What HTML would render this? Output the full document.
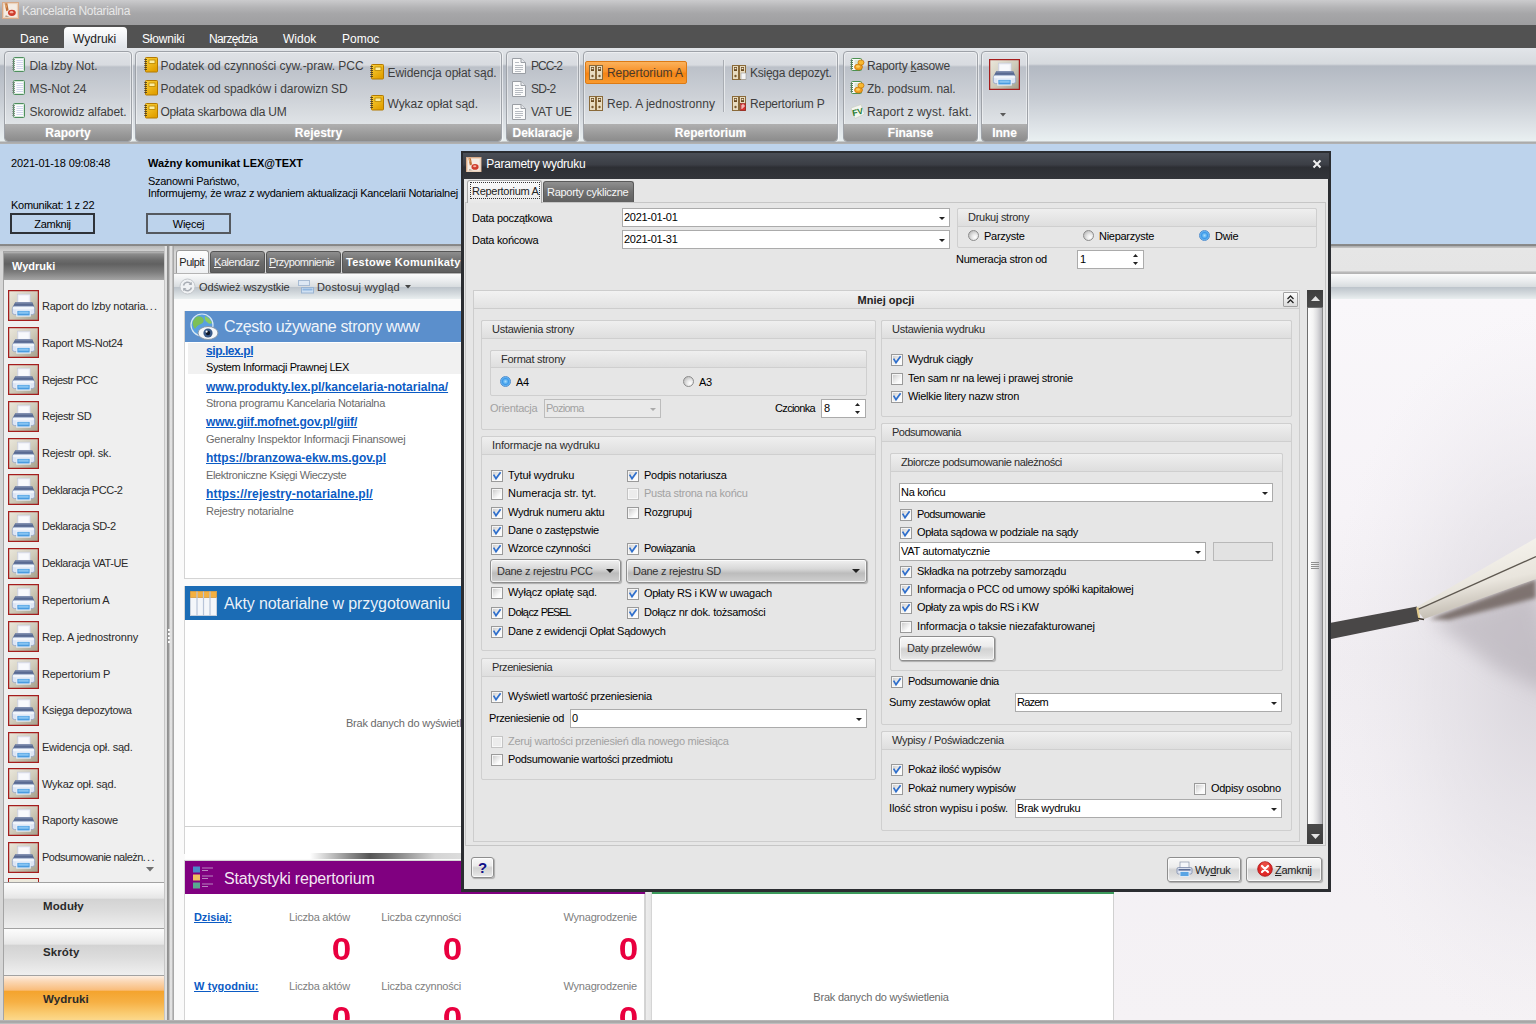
<!DOCTYPE html>
<html lang="pl"><head><meta charset="utf-8"><title>Kancelaria Notarialna</title>
<style>
html,body{margin:0;padding:0;background:#d6d6d6;}
#app{position:relative;width:1536px;height:1024px;overflow:hidden;font-family:"Liberation Sans",sans-serif;font-size:11px;color:#000;background:#d9d9d9;}
#app div,#app span,#app svg{position:absolute;box-sizing:border-box;}
#app span{white-space:nowrap;line-height:14px;}
.t{font-size:11px;letter-spacing:-0.28px;}
.s{font-size:11px;letter-spacing:-0.22px;color:#2a2a2a;}
.r{font-size:12px;letter-spacing:-0.05px;color:#3e3e3e;}
.m{font-size:12px;color:#fff;}
.b{font-weight:bold;}
.g{color:#6a6a6a;}
.dis{color:#a2a2a2;}
.lnk{font-size:12px;font-weight:bold;color:#0b5bc4;text-decoration:underline;}
.hd{font-size:16px;color:rgba(255,255,255,.92);letter-spacing:-0.36px;}
.cap{font-size:12px;font-weight:bold;color:#fff;text-align:center;text-shadow:0 0 2px rgba(255,255,255,.35);}
.grp{border:1px solid #cfcfcf;border-radius:2px;background:#e6e6e6;}
.grph{border:1px solid #cfcfcf;border-radius:2px 2px 0 0;background:linear-gradient(#efefef,#dedede);}
.inp{background:#fff;border:1px solid #ababab;}
.cb{border:1px solid #9a9a9a;background:linear-gradient(135deg,#c4c4c4 0,#e2e2e2 35%,#fbfbfb 70%);box-shadow:inset 0 0 0 1px rgba(250,250,250,.85);}
.cb.dis{border-color:#c4c4c4;background:#ececec;}
.rb{border-radius:50%;border:1px solid #8c8c8c;background:radial-gradient(circle at 68% 68%,#ffffff 0,#e8e8e8 35%,#b4b4b4 90%);}
.rb.on{border-color:#4f8fd0;background:radial-gradient(circle at 50% 50%,#a8dcfc 0,#58aef0 2.2px,#3c98e8 3px,#8fd0fa 5.5px);}
.btn{border:1px solid #8e8e8e;border-radius:3px;background:linear-gradient(#f8f8f8,#ececec 40%,#d2d2d2 52%,#dedede 80%,#ececec);box-shadow:inset 0 0 0 1px rgba(255,255,255,.7),1px 1px 1px rgba(0,0,0,.25);}

</style></head><body>
<div id="app">
<div style="left:0px;top:0px;width:1536px;height:25px;background:linear-gradient(#cbcbcd,#b4b4b6 30%,#a6a6a8 55%,#9e9ea0);"></div>
<svg style="left:2px;top:2px" width="17" height="17" viewBox="0 0 16 16"><rect x="0.5" y="0.5" width="15" height="15" fill="#f4ece4" stroke="#d8aa88"/><rect x="1.5" y="1.5" width="13" height="13" fill="none" stroke="#ead2bc" stroke-width="1"/><path d="M2.5 1.5 L5 1.2 L6.2 7.8 L4 8.8 Z" fill="#c07038"/><path d="M3 2 L4 2 L4.6 5 L3.6 5.4 Z" fill="#e8b070"/><ellipse cx="9.3" cy="10.2" rx="3.7" ry="2.9" fill="#cf3c2c"/><ellipse cx="9" cy="9.6" rx="1.7" ry="1.1" fill="#f4b0a0"/><path d="M3.5 12.5 L7 13.8 L3 14 Z" fill="#a89888"/></svg>
<span class="m" style="left:22px;top:3.5px;color:#e8e8e8;font-size:12px;letter-spacing:-0.32px;">Kancelaria Notarialna</span>
<div style="left:0px;top:25px;width:1536px;height:23px;background:#525252;"></div>
<div style="left:64px;top:27px;width:63px;height:21px;background:linear-gradient(#ffffff,#f0f2f5 50%,#dfe3e8);border-radius:4px 4px 0 0;"></div>
<span class="m" style="left:20px;top:32.0px;color:#fff;">Dane</span>
<span class="m" style="left:73px;top:32.0px;color:#1a1a1a;">Wydruki</span>
<span class="m" style="left:142px;top:32.0px;color:#fff;letter-spacing:-0.2px;">Słowniki</span>
<span class="m" style="left:209px;top:32.0px;color:#fff;letter-spacing:-0.65px;">Narzędzia</span>
<span class="m" style="left:283px;top:32.0px;color:#fff;">Widok</span>
<span class="m" style="left:342px;top:32.0px;color:#fff;">Pomoc</span>
<div style="left:0px;top:48px;width:1536px;height:96px;background:linear-gradient(#e2e5e9 0,#d6dade 16px,#b3b9c2 18px,#c6cbd2 50px,#dfe4e8 80px,#e9f0f1 93px,#a8a8a8 94px,#b4b4b4 96px);"></div>
<div style="left:4px;top:51px;width:128px;height:91px;border:1px solid #9ea2a8;border-radius:4px;background:linear-gradient(#dfe2e6 0,#d8dbe0 13px,#bcc1c9 15px,#cdd1d7 45px,#e0e4e7 73px);box-shadow:inset 0 0 0 1px rgba(255,255,255,.45), 1px 0 0 rgba(255,255,255,.6);"></div>
<div style="left:5px;top:124px;width:126px;height:17px;background:linear-gradient(#b0b0b0,#999999 60%,#8c8c8c);border-radius:0 0 3px 3px;"></div>
<span class="cap" style="left:4.0px;width:128px;text-align:center;top:125.5px;">Raporty</span>
<div style="left:135px;top:51px;width:367px;height:91px;border:1px solid #9ea2a8;border-radius:4px;background:linear-gradient(#dfe2e6 0,#d8dbe0 13px,#bcc1c9 15px,#cdd1d7 45px,#e0e4e7 73px);box-shadow:inset 0 0 0 1px rgba(255,255,255,.45), 1px 0 0 rgba(255,255,255,.6);"></div>
<div style="left:136px;top:124px;width:365px;height:17px;background:linear-gradient(#b0b0b0,#999999 60%,#8c8c8c);border-radius:0 0 3px 3px;"></div>
<span class="cap" style="left:135.0px;width:367px;text-align:center;top:125.5px;">Rejestry</span>
<div style="left:506px;top:51px;width:73px;height:91px;border:1px solid #9ea2a8;border-radius:4px;background:linear-gradient(#dfe2e6 0,#d8dbe0 13px,#bcc1c9 15px,#cdd1d7 45px,#e0e4e7 73px);box-shadow:inset 0 0 0 1px rgba(255,255,255,.45), 1px 0 0 rgba(255,255,255,.6);"></div>
<div style="left:507px;top:124px;width:71px;height:17px;background:linear-gradient(#b0b0b0,#999999 60%,#8c8c8c);border-radius:0 0 3px 3px;"></div>
<span class="cap" style="left:506.0px;width:73px;text-align:center;top:125.5px;">Deklaracje</span>
<div style="left:583px;top:51px;width:255px;height:91px;border:1px solid #9ea2a8;border-radius:4px;background:linear-gradient(#dfe2e6 0,#d8dbe0 13px,#bcc1c9 15px,#cdd1d7 45px,#e0e4e7 73px);box-shadow:inset 0 0 0 1px rgba(255,255,255,.45), 1px 0 0 rgba(255,255,255,.6);"></div>
<div style="left:584px;top:124px;width:253px;height:17px;background:linear-gradient(#b0b0b0,#999999 60%,#8c8c8c);border-radius:0 0 3px 3px;"></div>
<span class="cap" style="left:583.0px;width:255px;text-align:center;top:125.5px;">Repertorium</span>
<div style="left:843px;top:51px;width:135px;height:91px;border:1px solid #9ea2a8;border-radius:4px;background:linear-gradient(#dfe2e6 0,#d8dbe0 13px,#bcc1c9 15px,#cdd1d7 45px,#e0e4e7 73px);box-shadow:inset 0 0 0 1px rgba(255,255,255,.45), 1px 0 0 rgba(255,255,255,.6);"></div>
<div style="left:844px;top:124px;width:133px;height:17px;background:linear-gradient(#b0b0b0,#999999 60%,#8c8c8c);border-radius:0 0 3px 3px;"></div>
<span class="cap" style="left:843.0px;width:135px;text-align:center;top:125.5px;">Finanse</span>
<div style="left:981px;top:51px;width:47px;height:91px;border:1px solid #9ea2a8;border-radius:4px;background:linear-gradient(#dfe2e6 0,#d8dbe0 13px,#bcc1c9 15px,#cdd1d7 45px,#e0e4e7 73px);box-shadow:inset 0 0 0 1px rgba(255,255,255,.45), 1px 0 0 rgba(255,255,255,.6);"></div>
<div style="left:982px;top:124px;width:45px;height:17px;background:linear-gradient(#b0b0b0,#999999 60%,#8c8c8c);border-radius:0 0 3px 3px;"></div>
<span class="cap" style="left:981.0px;width:47px;text-align:center;top:125.5px;">Inne</span>
<svg style="left:11.5px;top:56.8px" width="14" height="15" viewBox="0 0 14 15"><rect x="1.5" y="0.5" width="11" height="14" rx="1" fill="#fdfdfe" stroke="#4f8f5e"/><rect x="2.5" y="1.5" width="9" height="12" fill="none" stroke="#cfe6d4" stroke-width=".8"/><path d="M4.5 3.5H11M4.5 5.5H11M4.5 7.5H11M4.5 9.5H11M4.5 11.5H11" stroke="#d4d8ee" stroke-width="1"/><path d="M0.3 2.5H3M0.3 4.5H3M0.3 6.5H3M0.3 8.5H3M0.3 10.5H3M0.3 12.5H3" stroke="#7a8480" stroke-width=".9"/></svg>
<span class="r" style="left:29.5px;top:58.5px;">Dla Izby Not.</span>
<svg style="left:11.5px;top:79.8px" width="14" height="15" viewBox="0 0 14 15"><rect x="1.5" y="0.5" width="11" height="14" rx="1" fill="#fdfdfe" stroke="#4f8f5e"/><rect x="2.5" y="1.5" width="9" height="12" fill="none" stroke="#cfe6d4" stroke-width=".8"/><path d="M4.5 3.5H11M4.5 5.5H11M4.5 7.5H11M4.5 9.5H11M4.5 11.5H11" stroke="#d4d8ee" stroke-width="1"/><path d="M0.3 2.5H3M0.3 4.5H3M0.3 6.5H3M0.3 8.5H3M0.3 10.5H3M0.3 12.5H3" stroke="#7a8480" stroke-width=".9"/></svg>
<span class="r" style="left:29.5px;top:81.5px;">MS-Not 24</span>
<svg style="left:11.5px;top:102.8px" width="14" height="15" viewBox="0 0 14 15"><rect x="1.5" y="0.5" width="11" height="14" rx="1" fill="#fdfdfe" stroke="#4f8f5e"/><rect x="2.5" y="1.5" width="9" height="12" fill="none" stroke="#cfe6d4" stroke-width=".8"/><path d="M4.5 3.5H11M4.5 5.5H11M4.5 7.5H11M4.5 9.5H11M4.5 11.5H11" stroke="#d4d8ee" stroke-width="1"/><path d="M0.3 2.5H3M0.3 4.5H3M0.3 6.5H3M0.3 8.5H3M0.3 10.5H3M0.3 12.5H3" stroke="#7a8480" stroke-width=".9"/></svg>
<span class="r" style="left:29.5px;top:104.5px;">Skorowidz alfabet.</span>
<svg style="left:143.7px;top:56.8px" width="14" height="16" viewBox="0 0 14 16"><defs><linearGradient id="ny143_56" x1="0" y1="0" x2="0.6" y2="1"><stop offset="0" stop-color="#fbd23a"/><stop offset="1" stop-color="#e2a000"/></linearGradient></defs><rect x="1.5" y="0.5" width="12" height="14.5" rx="0.8" fill="url(#ny143_56)" stroke="#b47a00"/><rect x="5" y="3" width="6" height="3.4" fill="#fdeea0" stroke="#b88600" stroke-width=".8"/><path d="M0.3 2.5H3M0.3 4.5H3M0.3 6.5H3M0.3 8.5H3M0.3 10.5H3M0.3 12.5H3" stroke="#4a3c20" stroke-width=".9"/></svg>
<span class="r" style="left:160.5px;top:58.5px;">Podatek od czynności cyw.-praw. PCC</span>
<svg style="left:143.7px;top:79.8px" width="14" height="16" viewBox="0 0 14 16"><defs><linearGradient id="ny143_79" x1="0" y1="0" x2="0.6" y2="1"><stop offset="0" stop-color="#fbd23a"/><stop offset="1" stop-color="#e2a000"/></linearGradient></defs><rect x="1.5" y="0.5" width="12" height="14.5" rx="0.8" fill="url(#ny143_79)" stroke="#b47a00"/><rect x="5" y="3" width="6" height="3.4" fill="#fdeea0" stroke="#b88600" stroke-width=".8"/><path d="M0.3 2.5H3M0.3 4.5H3M0.3 6.5H3M0.3 8.5H3M0.3 10.5H3M0.3 12.5H3" stroke="#4a3c20" stroke-width=".9"/></svg>
<span class="r" style="left:160.5px;top:81.5px;">Podatek od spadków i darowizn SD</span>
<svg style="left:143.7px;top:102.8px" width="14" height="16" viewBox="0 0 14 16"><defs><linearGradient id="ny143_102" x1="0" y1="0" x2="0.6" y2="1"><stop offset="0" stop-color="#fbd23a"/><stop offset="1" stop-color="#e2a000"/></linearGradient></defs><rect x="1.5" y="0.5" width="12" height="14.5" rx="0.8" fill="url(#ny143_102)" stroke="#b47a00"/><rect x="5" y="3" width="6" height="3.4" fill="#fdeea0" stroke="#b88600" stroke-width=".8"/><path d="M0.3 2.5H3M0.3 4.5H3M0.3 6.5H3M0.3 8.5H3M0.3 10.5H3M0.3 12.5H3" stroke="#4a3c20" stroke-width=".9"/></svg>
<span class="r" style="left:160.5px;top:104.5px;letter-spacing:-0.25px;">Opłata skarbowa dla UM</span>
<svg style="left:370px;top:64.3px" width="14" height="16" viewBox="0 0 14 16"><defs><linearGradient id="ny370_64" x1="0" y1="0" x2="0.6" y2="1"><stop offset="0" stop-color="#fbd23a"/><stop offset="1" stop-color="#e2a000"/></linearGradient></defs><rect x="1.5" y="0.5" width="12" height="14.5" rx="0.8" fill="url(#ny370_64)" stroke="#b47a00"/><rect x="5" y="3" width="6" height="3.4" fill="#fdeea0" stroke="#b88600" stroke-width=".8"/><path d="M0.3 2.5H3M0.3 4.5H3M0.3 6.5H3M0.3 8.5H3M0.3 10.5H3M0.3 12.5H3" stroke="#4a3c20" stroke-width=".9"/></svg>
<span class="r" style="left:387.5px;top:66.0px;">Ewidencja opłat sąd.</span>
<svg style="left:370px;top:95.3px" width="14" height="16" viewBox="0 0 14 16"><defs><linearGradient id="ny370_95" x1="0" y1="0" x2="0.6" y2="1"><stop offset="0" stop-color="#fbd23a"/><stop offset="1" stop-color="#e2a000"/></linearGradient></defs><rect x="1.5" y="0.5" width="12" height="14.5" rx="0.8" fill="url(#ny370_95)" stroke="#b47a00"/><rect x="5" y="3" width="6" height="3.4" fill="#fdeea0" stroke="#b88600" stroke-width=".8"/><path d="M0.3 2.5H3M0.3 4.5H3M0.3 6.5H3M0.3 8.5H3M0.3 10.5H3M0.3 12.5H3" stroke="#4a3c20" stroke-width=".9"/></svg>
<span class="r" style="left:387.5px;top:97.0px;">Wykaz opłat sąd.</span>
<svg style="left:512px;top:57.5px" width="14" height="16" viewBox="0 0 14 16"><path d="M0.5 0.5H9L13.5 4.5V15.5H0.5Z" fill="#fbfbfb" stroke="#9a9ea4"/><path d="M9 0.5V4.5H13.5" fill="#e4e6ea" stroke="#9a9ea4"/><path d="M3 4.5H7M3 7.5H11M3 9.5H11M3 11.5H11M3 13.5H9" stroke="#b8bcc2" stroke-width="1"/></svg>
<span class="r" style="left:531px;top:58.5px;letter-spacing:-1.0px;">PCC-2</span>
<svg style="left:512px;top:80.5px" width="14" height="16" viewBox="0 0 14 16"><path d="M0.5 0.5H9L13.5 4.5V15.5H0.5Z" fill="#fbfbfb" stroke="#9a9ea4"/><path d="M9 0.5V4.5H13.5" fill="#e4e6ea" stroke="#9a9ea4"/><path d="M3 4.5H7M3 7.5H11M3 9.5H11M3 11.5H11M3 13.5H9" stroke="#b8bcc2" stroke-width="1"/></svg>
<span class="r" style="left:531px;top:81.5px;letter-spacing:-0.7px;">SD-2</span>
<svg style="left:512px;top:103.5px" width="14" height="16" viewBox="0 0 14 16"><path d="M0.5 0.5H9L13.5 4.5V15.5H0.5Z" fill="#fbfbfb" stroke="#9a9ea4"/><path d="M9 0.5V4.5H13.5" fill="#e4e6ea" stroke="#9a9ea4"/><path d="M3 4.5H7M3 7.5H11M3 9.5H11M3 11.5H11M3 13.5H9" stroke="#b8bcc2" stroke-width="1"/></svg>
<span class="r" style="left:531px;top:104.5px;">VAT UE</span>
<div style="left:585px;top:61px;width:102px;height:23px;border:1px solid #dc7a14;border-radius:2px;background:linear-gradient(#fbb25c,#f8922a 45%,#f58414 55%,#f99a2e);"></div>
<svg style="left:589px;top:65px" width="15" height="15" viewBox="0 0 15 15"><rect x="0.5" y="0.5" width="6" height="14" fill="#e8dcc0" stroke="#8a6a3a"/><rect x="7.5" y="0.5" width="6" height="14" fill="#e8dcc0" stroke="#8a6a3a"/><rect x="2" y="2" width="3" height="4" fill="#6a4a20"/><rect x="9" y="2" width="3" height="4" fill="#6a4a20"/><circle cx="3.5" cy="11" r="1.2" fill="#7a5a30"/><circle cx="10.5" cy="11" r="1.2" fill="#7a5a30"/><rect x="2.6" y="2.8" width="1.8" height="1.4" fill="#f4ecd8"/><rect x="9.6" y="2.8" width="1.8" height="1.4" fill="#f4ecd8"/></svg>
<span class="r" style="left:607px;top:66.0px;color:#4a3a2a;">Repertorium A</span>
<svg style="left:589px;top:96px" width="15" height="15" viewBox="0 0 15 15"><rect x="0.5" y="0.5" width="6" height="14" fill="#e8dcc0" stroke="#8a6a3a"/><rect x="7.5" y="0.5" width="6" height="14" fill="#e8dcc0" stroke="#8a6a3a"/><rect x="2" y="2" width="3" height="4" fill="#6a4a20"/><rect x="9" y="2" width="3" height="4" fill="#6a4a20"/><circle cx="3.5" cy="11" r="1.2" fill="#7a5a30"/><circle cx="10.5" cy="11" r="1.2" fill="#7a5a30"/><rect x="2.6" y="2.8" width="1.8" height="1.4" fill="#f4ecd8"/><rect x="9.6" y="2.8" width="1.8" height="1.4" fill="#f4ecd8"/></svg>
<span class="r" style="left:607px;top:97.0px;letter-spacing:0.03px;">Rep. A jednostronny</span>
<div style="left:723px;top:60px;width:1px;height:52px;background:#a9adb3;"></div>
<div style="left:724px;top:60px;width:1px;height:52px;background:#e6e9ec;"></div>
<svg style="left:732px;top:65px" width="15" height="15" viewBox="0 0 15 15"><rect x="0.5" y="0.5" width="6" height="14" fill="#e8dcc0" stroke="#8a6a3a"/><rect x="7.5" y="0.5" width="6" height="14" fill="#e8dcc0" stroke="#8a6a3a"/><rect x="2" y="2" width="3" height="4" fill="#6a4a20"/><rect x="9" y="2" width="3" height="4" fill="#6a4a20"/><circle cx="3.5" cy="11" r="1.2" fill="#7a5a30"/><circle cx="10.5" cy="11" r="1.2" fill="#7a5a30"/><rect x="2.6" y="2.8" width="1.8" height="1.4" fill="#f4ecd8"/><rect x="9.6" y="2.8" width="1.8" height="1.4" fill="#f4ecd8"/><rect x="9" y="8" width="5" height="6.5" fill="#f4f4f4" stroke="#9a9a9a" stroke-width=".6"/></svg>
<span class="r" style="left:750px;top:66.0px;letter-spacing:-0.25px;">Księga depozyt.</span>
<svg style="left:732px;top:96px" width="15" height="15" viewBox="0 0 15 15"><rect x="0.5" y="0.5" width="6" height="14" fill="#e8dcc0" stroke="#8a6a3a"/><rect x="7.5" y="0.5" width="6" height="14" fill="#e8dcc0" stroke="#8a6a3a"/><rect x="2" y="2" width="3" height="4" fill="#6a4a20"/><rect x="9" y="2" width="3" height="4" fill="#6a4a20"/><circle cx="3.5" cy="11" r="1.2" fill="#7a5a30"/><circle cx="10.5" cy="11" r="1.2" fill="#7a5a30"/><rect x="2.6" y="2.8" width="1.8" height="1.4" fill="#f4ecd8"/><rect x="9.6" y="2.8" width="1.8" height="1.4" fill="#f4ecd8"/><rect x="8.5" y="7.5" width="5" height="7" fill="#d83030" stroke="#902020" stroke-width=".6"/><path d="M10 13V9H12V11H10" stroke="#fff" stroke-width=".8" fill="none"/></svg>
<span class="r" style="left:750px;top:97.0px;letter-spacing:-0.22px;">Repertorium P</span>
<svg style="left:850px;top:57px" width="15" height="15" viewBox="0 0 15 15"><rect x="1.5" y="1.5" width="10" height="12" rx="1" fill="#f8faf8" stroke="#4a9050"/><path d="M0.5 3.5H3M0.5 5.5H3M0.5 7.5H3M0.5 9.5H3M0.5 11.5H3" stroke="#5a7a60" stroke-width="1"/><path d="M4.5 4H9M4.5 6H8" stroke="#b8d0bc" stroke-width="1"/><ellipse cx="8.5" cy="10" rx="4" ry="3" fill="#f0a020" stroke="#c07000" stroke-width=".7"/><ellipse cx="11" cy="5.5" rx="3" ry="2.6" fill="#f8b830" stroke="#c07000" stroke-width=".7"/><ellipse cx="8" cy="9.5" rx="2" ry="1.2" fill="#fcd060"/></svg>
<span class="r" style="left:867px;top:58.5px;letter-spacing:-0.22px;">Raporty <u>k</u>asowe</span>
<svg style="left:850px;top:80px" width="15" height="15" viewBox="0 0 15 15"><rect x="1.5" y="1.5" width="10" height="12" rx="1" fill="#f8faf8" stroke="#4a9050"/><path d="M0.5 3.5H3M0.5 5.5H3M0.5 7.5H3M0.5 9.5H3M0.5 11.5H3" stroke="#5a7a60" stroke-width="1"/><path d="M4.5 4H9M4.5 6H8" stroke="#b8d0bc" stroke-width="1"/><ellipse cx="8.5" cy="10" rx="4" ry="3" fill="#f0a020" stroke="#c07000" stroke-width=".7"/><ellipse cx="11" cy="5.5" rx="3" ry="2.6" fill="#f8b830" stroke="#c07000" stroke-width=".7"/><ellipse cx="8" cy="9.5" rx="2" ry="1.2" fill="#fcd060"/></svg>
<span class="r" style="left:867px;top:81.5px;">Zb. podsum. nal.</span>
<svg style="left:850px;top:104px" width="15" height="15" viewBox="0 0 15 15"><path d="M1 4L11 0.5L14.5 10L5 14.5Z" fill="#f4f6f0" stroke="#c8ccc0" stroke-width=".6"/><text x="2.2" y="11" font-family="Liberation Sans,sans-serif" font-size="8.5" font-weight="bold" fill="#1c7a2c" transform="rotate(-12 7 8)">FV</text></svg>
<span class="r" style="left:867px;top:104.5px;letter-spacing:0.15px;">Raport z wyst. fakt.</span>
<svg style="left:989px;top:59px" width="31" height="31" viewBox="0 0 30 30"><defs><linearGradient id="pg989_59" x1="0" y1="0" x2="1" y2="1"><stop offset="0" stop-color="#ebe8dc"/><stop offset="0.5" stop-color="#cfcbbb"/><stop offset="1" stop-color="#a29e8b"/></linearGradient></defs><rect x="0.6" y="0.6" width="28.8" height="28.8" fill="url(#pg989_59)" stroke="#a51d1d" stroke-width="1.2"/><rect x="9" y="4" width="12.5" height="9" fill="#eceef6" stroke="#c4c8d6" stroke-width=".6"/><rect x="10.5" y="5.5" width="9.5" height="6" fill="#f8f9fc"/><path d="M7 11.8H23.5L25.5 16.5H4.5Z" fill="#596a92"/><path d="M7.4 11.8H23.1L23.6 13H6.9Z" fill="#8391b2"/><rect x="4.2" y="15.8" width="21.6" height="8" rx="2.2" fill="#dde5f4" stroke="#93a4c6" stroke-width=".8"/><rect x="4.8" y="16.2" width="20.4" height="2.4" rx="1.1" fill="#f1f5fb"/><rect x="8.5" y="19.6" width="13" height="5.6" fill="#4a9ce0" stroke="#edf2fa" stroke-width="1.1"/><rect x="10" y="20.8" width="10" height="2.2" fill="#86c4f2"/></svg>
<svg style="left:1000px;top:113px" width="6" height="4" viewBox="0 0 6 4"><path d="M0 0H6L3 3.5Z" fill="#5a5a5a"/></svg>
<div style="left:0px;top:144px;width:1536px;height:100px;background:#bdd3ec;"></div>
<div style="left:0px;top:243.6px;width:1536px;height:3.4px;background:linear-gradient(#8e8e8e,#828282 45%,#b4b4b4);"></div>
<span class="t" style="left:11px;top:156.0px;letter-spacing:-0.15px;">2021-01-18 09:08:48</span>
<span class="t b" style="left:148px;top:156.0px;letter-spacing:-0.03px;">Ważny komunikat LEX@TEXT</span>
<span class="t" style="left:148px;top:173.5px;">Szanowni Państwo,</span>
<span class="t" style="left:148px;top:186.0px;">Informujemy, że wraz z wydaniem aktualizacji Kancelarii Notarialnej</span>
<span class="t" style="left:11px;top:198.0px;">Komunikat: 1 z 22</span>
<div style="left:10px;top:213px;width:85px;height:21px;border:2px solid #2e3238;background:#bdd3ec;"></div>
<span class="t" style="left:10.0px;width:85px;text-align:center;top:216.5px;">Zamknij</span>
<div style="left:146px;top:213px;width:85px;height:21px;border:2px solid #55595f;background:#bdd3ec;"></div>
<span class="t" style="left:146.0px;width:85px;text-align:center;top:216.5px;">Więcej</span>
<div style="left:0px;top:246px;width:1536px;height:778px;background:linear-gradient(#b8b8b8 0,#cccccc 4px,#d6d6d6 6px);"></div>
<div style="left:1113px;top:246px;width:423px;height:28px;background:linear-gradient(#a8a8a8 0,#c0c0c0 1.5px,#e6e6e6 2px,#e5e5e5 25px,#b4b4b4 26px,#c8c8c8 28px);"></div>
<svg style="left:1113px;top:298px" width="423" height="722" viewBox="0 0 423 722"><defs><linearGradient id="ph1" x1="0" y1="0" x2="0" y2="1"><stop offset="0" stop-color="#f9f7fa"/><stop offset="0.3" stop-color="#f6f3f7"/><stop offset="0.5" stop-color="#f0edf1"/><stop offset="0.7" stop-color="#f3f0f4"/><stop offset="1" stop-color="#f5f2f5"/></linearGradient><linearGradient id="ph2" x1="0" y1="0" x2="0.38" y2="1"><stop offset="0" stop-color="#fbf9f5"/><stop offset="0.5" stop-color="#f0ede6"/><stop offset="1" stop-color="#e2ded5"/></linearGradient><linearGradient id="ph4" x1="0" y1="0" x2="0.38" y2="1"><stop offset="0" stop-color="#f4f1ea"/><stop offset="0.55" stop-color="#e9e5dd"/><stop offset="1" stop-color="#b9b2a7"/></linearGradient><radialGradient id="ph3" cx="1.0" cy="0.52" r="0.5"><stop offset="0" stop-color="#d4d0d7" stop-opacity=".85"/><stop offset="0.5" stop-color="#e0dde3" stop-opacity=".5"/><stop offset="1" stop-color="#eeebf0" stop-opacity="0"/></radialGradient><filter id="bl" x="-30%" y="-30%" width="160%" height="160%"><feGaussianBlur stdDeviation="9"/></filter><filter id="bl1" x="-10%" y="-30%" width="120%" height="160%"><feGaussianBlur stdDeviation="2.2"/></filter><filter id="bl2"><feGaussianBlur stdDeviation="0.6"/></filter></defs><rect width="423" height="722" fill="url(#ph1)"/><rect width="423" height="722" fill="url(#ph3)"/><path d="M318 322 L423 290 L450 400 L385 372 Z" fill="#b4aeb6" opacity=".6" filter="url(#bl)"/><path d="M316 321 L423 281 L423 300 L336 322 Z" fill="#6f645e" opacity=".85" filter="url(#bl1)"/><path d="M218 324.7 L304 308.5 L306 323 L218 341 Z" fill="#4a4747" filter="url(#bl2)"/><path d="M303.5 309 L423 240 L423 258.8 L304 312 Z" fill="url(#ph2)"/><path d="M304 312 L423 258.8 L423 281 L311 321 Z" fill="url(#ph4)"/><path d="M304 311.8 L423 258.6" stroke="#5e5850" stroke-width="1.3" fill="none"/><path d="M303.3 310 L305.3 309 L307.3 321.5 L305.5 322 Z" fill="#e4cc8c"/><path d="M305 320.5 L311 321.5" stroke="#3c342c" stroke-width="1.5"/></svg>
<div style="left:0px;top:1020px;width:1536px;height:4px;background:linear-gradient(#bdbdbd,#a0a0a0 50%,#c8c8c8);"></div>
<div style="left:3px;top:251px;width:162px;height:771px;background:#efefef;border:1px solid #a4a4a4;"></div>
<div style="left:4px;top:252px;width:160px;height:28px;background:linear-gradient(#b8b8b8 0,#8c8c8c 2px,#6c6c6c 8px,#616161 12px,#7c7c7c 20px,#a4a4a4 28px);"></div>
<span class="t b" style="left:12px;top:259.0px;color:#fff;font-size:11px;letter-spacing:0;">Wydruki</span>
<svg style="left:8px;top:290px" width="31" height="31" viewBox="0 0 30 30"><defs><linearGradient id="pg8_290" x1="0" y1="0" x2="1" y2="1"><stop offset="0" stop-color="#ebe8dc"/><stop offset="0.5" stop-color="#cfcbbb"/><stop offset="1" stop-color="#a29e8b"/></linearGradient></defs><rect x="0.6" y="0.6" width="28.8" height="28.8" fill="url(#pg8_290)" stroke="#a51d1d" stroke-width="1.2"/><rect x="9" y="4" width="12.5" height="9" fill="#eceef6" stroke="#c4c8d6" stroke-width=".6"/><rect x="10.5" y="5.5" width="9.5" height="6" fill="#f8f9fc"/><path d="M7 11.8H23.5L25.5 16.5H4.5Z" fill="#596a92"/><path d="M7.4 11.8H23.1L23.6 13H6.9Z" fill="#8391b2"/><rect x="4.2" y="15.8" width="21.6" height="8" rx="2.2" fill="#dde5f4" stroke="#93a4c6" stroke-width=".8"/><rect x="4.8" y="16.2" width="20.4" height="2.4" rx="1.1" fill="#f1f5fb"/><rect x="8.5" y="19.6" width="13" height="5.6" fill="#4a9ce0" stroke="#edf2fa" stroke-width="1.1"/><rect x="10" y="20.8" width="10" height="2.2" fill="#86c4f2"/></svg>
<span class="s" style="left:42px;top:299.0px;">Raport do Izby notaria<span style="position:static;letter-spacing:1.25px">...</span></span>
<svg style="left:8px;top:327px" width="31" height="31" viewBox="0 0 30 30"><defs><linearGradient id="pg8_327" x1="0" y1="0" x2="1" y2="1"><stop offset="0" stop-color="#ebe8dc"/><stop offset="0.5" stop-color="#cfcbbb"/><stop offset="1" stop-color="#a29e8b"/></linearGradient></defs><rect x="0.6" y="0.6" width="28.8" height="28.8" fill="url(#pg8_327)" stroke="#a51d1d" stroke-width="1.2"/><rect x="9" y="4" width="12.5" height="9" fill="#eceef6" stroke="#c4c8d6" stroke-width=".6"/><rect x="10.5" y="5.5" width="9.5" height="6" fill="#f8f9fc"/><path d="M7 11.8H23.5L25.5 16.5H4.5Z" fill="#596a92"/><path d="M7.4 11.8H23.1L23.6 13H6.9Z" fill="#8391b2"/><rect x="4.2" y="15.8" width="21.6" height="8" rx="2.2" fill="#dde5f4" stroke="#93a4c6" stroke-width=".8"/><rect x="4.8" y="16.2" width="20.4" height="2.4" rx="1.1" fill="#f1f5fb"/><rect x="8.5" y="19.6" width="13" height="5.6" fill="#4a9ce0" stroke="#edf2fa" stroke-width="1.1"/><rect x="10" y="20.8" width="10" height="2.2" fill="#86c4f2"/></svg>
<span class="s" style="left:42px;top:336.0px;letter-spacing:-0.34px;">Raport MS-Not24</span>
<svg style="left:8px;top:364px" width="31" height="31" viewBox="0 0 30 30"><defs><linearGradient id="pg8_364" x1="0" y1="0" x2="1" y2="1"><stop offset="0" stop-color="#ebe8dc"/><stop offset="0.5" stop-color="#cfcbbb"/><stop offset="1" stop-color="#a29e8b"/></linearGradient></defs><rect x="0.6" y="0.6" width="28.8" height="28.8" fill="url(#pg8_364)" stroke="#a51d1d" stroke-width="1.2"/><rect x="9" y="4" width="12.5" height="9" fill="#eceef6" stroke="#c4c8d6" stroke-width=".6"/><rect x="10.5" y="5.5" width="9.5" height="6" fill="#f8f9fc"/><path d="M7 11.8H23.5L25.5 16.5H4.5Z" fill="#596a92"/><path d="M7.4 11.8H23.1L23.6 13H6.9Z" fill="#8391b2"/><rect x="4.2" y="15.8" width="21.6" height="8" rx="2.2" fill="#dde5f4" stroke="#93a4c6" stroke-width=".8"/><rect x="4.8" y="16.2" width="20.4" height="2.4" rx="1.1" fill="#f1f5fb"/><rect x="8.5" y="19.6" width="13" height="5.6" fill="#4a9ce0" stroke="#edf2fa" stroke-width="1.1"/><rect x="10" y="20.8" width="10" height="2.2" fill="#86c4f2"/></svg>
<span class="s" style="left:42px;top:373.0px;letter-spacing:-0.5px;">Rejestr PCC</span>
<svg style="left:8px;top:401px" width="31" height="31" viewBox="0 0 30 30"><defs><linearGradient id="pg8_401" x1="0" y1="0" x2="1" y2="1"><stop offset="0" stop-color="#ebe8dc"/><stop offset="0.5" stop-color="#cfcbbb"/><stop offset="1" stop-color="#a29e8b"/></linearGradient></defs><rect x="0.6" y="0.6" width="28.8" height="28.8" fill="url(#pg8_401)" stroke="#a51d1d" stroke-width="1.2"/><rect x="9" y="4" width="12.5" height="9" fill="#eceef6" stroke="#c4c8d6" stroke-width=".6"/><rect x="10.5" y="5.5" width="9.5" height="6" fill="#f8f9fc"/><path d="M7 11.8H23.5L25.5 16.5H4.5Z" fill="#596a92"/><path d="M7.4 11.8H23.1L23.6 13H6.9Z" fill="#8391b2"/><rect x="4.2" y="15.8" width="21.6" height="8" rx="2.2" fill="#dde5f4" stroke="#93a4c6" stroke-width=".8"/><rect x="4.8" y="16.2" width="20.4" height="2.4" rx="1.1" fill="#f1f5fb"/><rect x="8.5" y="19.6" width="13" height="5.6" fill="#4a9ce0" stroke="#edf2fa" stroke-width="1.1"/><rect x="10" y="20.8" width="10" height="2.2" fill="#86c4f2"/></svg>
<span class="s" style="left:42px;top:409.0px;letter-spacing:-0.4px;">Rejestr SD</span>
<svg style="left:8px;top:438px" width="31" height="31" viewBox="0 0 30 30"><defs><linearGradient id="pg8_438" x1="0" y1="0" x2="1" y2="1"><stop offset="0" stop-color="#ebe8dc"/><stop offset="0.5" stop-color="#cfcbbb"/><stop offset="1" stop-color="#a29e8b"/></linearGradient></defs><rect x="0.6" y="0.6" width="28.8" height="28.8" fill="url(#pg8_438)" stroke="#a51d1d" stroke-width="1.2"/><rect x="9" y="4" width="12.5" height="9" fill="#eceef6" stroke="#c4c8d6" stroke-width=".6"/><rect x="10.5" y="5.5" width="9.5" height="6" fill="#f8f9fc"/><path d="M7 11.8H23.5L25.5 16.5H4.5Z" fill="#596a92"/><path d="M7.4 11.8H23.1L23.6 13H6.9Z" fill="#8391b2"/><rect x="4.2" y="15.8" width="21.6" height="8" rx="2.2" fill="#dde5f4" stroke="#93a4c6" stroke-width=".8"/><rect x="4.8" y="16.2" width="20.4" height="2.4" rx="1.1" fill="#f1f5fb"/><rect x="8.5" y="19.6" width="13" height="5.6" fill="#4a9ce0" stroke="#edf2fa" stroke-width="1.1"/><rect x="10" y="20.8" width="10" height="2.2" fill="#86c4f2"/></svg>
<span class="s" style="left:42px;top:446.0px;">Rejestr opł. sk.</span>
<svg style="left:8px;top:474px" width="31" height="31" viewBox="0 0 30 30"><defs><linearGradient id="pg8_474" x1="0" y1="0" x2="1" y2="1"><stop offset="0" stop-color="#ebe8dc"/><stop offset="0.5" stop-color="#cfcbbb"/><stop offset="1" stop-color="#a29e8b"/></linearGradient></defs><rect x="0.6" y="0.6" width="28.8" height="28.8" fill="url(#pg8_474)" stroke="#a51d1d" stroke-width="1.2"/><rect x="9" y="4" width="12.5" height="9" fill="#eceef6" stroke="#c4c8d6" stroke-width=".6"/><rect x="10.5" y="5.5" width="9.5" height="6" fill="#f8f9fc"/><path d="M7 11.8H23.5L25.5 16.5H4.5Z" fill="#596a92"/><path d="M7.4 11.8H23.1L23.6 13H6.9Z" fill="#8391b2"/><rect x="4.2" y="15.8" width="21.6" height="8" rx="2.2" fill="#dde5f4" stroke="#93a4c6" stroke-width=".8"/><rect x="4.8" y="16.2" width="20.4" height="2.4" rx="1.1" fill="#f1f5fb"/><rect x="8.5" y="19.6" width="13" height="5.6" fill="#4a9ce0" stroke="#edf2fa" stroke-width="1.1"/><rect x="10" y="20.8" width="10" height="2.2" fill="#86c4f2"/></svg>
<span class="s" style="left:42px;top:483.0px;letter-spacing:-0.47px;">Deklaracja PCC-2</span>
<svg style="left:8px;top:511px" width="31" height="31" viewBox="0 0 30 30"><defs><linearGradient id="pg8_511" x1="0" y1="0" x2="1" y2="1"><stop offset="0" stop-color="#ebe8dc"/><stop offset="0.5" stop-color="#cfcbbb"/><stop offset="1" stop-color="#a29e8b"/></linearGradient></defs><rect x="0.6" y="0.6" width="28.8" height="28.8" fill="url(#pg8_511)" stroke="#a51d1d" stroke-width="1.2"/><rect x="9" y="4" width="12.5" height="9" fill="#eceef6" stroke="#c4c8d6" stroke-width=".6"/><rect x="10.5" y="5.5" width="9.5" height="6" fill="#f8f9fc"/><path d="M7 11.8H23.5L25.5 16.5H4.5Z" fill="#596a92"/><path d="M7.4 11.8H23.1L23.6 13H6.9Z" fill="#8391b2"/><rect x="4.2" y="15.8" width="21.6" height="8" rx="2.2" fill="#dde5f4" stroke="#93a4c6" stroke-width=".8"/><rect x="4.8" y="16.2" width="20.4" height="2.4" rx="1.1" fill="#f1f5fb"/><rect x="8.5" y="19.6" width="13" height="5.6" fill="#4a9ce0" stroke="#edf2fa" stroke-width="1.1"/><rect x="10" y="20.8" width="10" height="2.2" fill="#86c4f2"/></svg>
<span class="s" style="left:42px;top:519.0px;letter-spacing:-0.43px;">Deklaracja SD-2</span>
<svg style="left:8px;top:548px" width="31" height="31" viewBox="0 0 30 30"><defs><linearGradient id="pg8_548" x1="0" y1="0" x2="1" y2="1"><stop offset="0" stop-color="#ebe8dc"/><stop offset="0.5" stop-color="#cfcbbb"/><stop offset="1" stop-color="#a29e8b"/></linearGradient></defs><rect x="0.6" y="0.6" width="28.8" height="28.8" fill="url(#pg8_548)" stroke="#a51d1d" stroke-width="1.2"/><rect x="9" y="4" width="12.5" height="9" fill="#eceef6" stroke="#c4c8d6" stroke-width=".6"/><rect x="10.5" y="5.5" width="9.5" height="6" fill="#f8f9fc"/><path d="M7 11.8H23.5L25.5 16.5H4.5Z" fill="#596a92"/><path d="M7.4 11.8H23.1L23.6 13H6.9Z" fill="#8391b2"/><rect x="4.2" y="15.8" width="21.6" height="8" rx="2.2" fill="#dde5f4" stroke="#93a4c6" stroke-width=".8"/><rect x="4.8" y="16.2" width="20.4" height="2.4" rx="1.1" fill="#f1f5fb"/><rect x="8.5" y="19.6" width="13" height="5.6" fill="#4a9ce0" stroke="#edf2fa" stroke-width="1.1"/><rect x="10" y="20.8" width="10" height="2.2" fill="#86c4f2"/></svg>
<span class="s" style="left:42px;top:556.0px;letter-spacing:-0.42px;">Deklaracja VAT-UE</span>
<svg style="left:8px;top:584px" width="31" height="31" viewBox="0 0 30 30"><defs><linearGradient id="pg8_584" x1="0" y1="0" x2="1" y2="1"><stop offset="0" stop-color="#ebe8dc"/><stop offset="0.5" stop-color="#cfcbbb"/><stop offset="1" stop-color="#a29e8b"/></linearGradient></defs><rect x="0.6" y="0.6" width="28.8" height="28.8" fill="url(#pg8_584)" stroke="#a51d1d" stroke-width="1.2"/><rect x="9" y="4" width="12.5" height="9" fill="#eceef6" stroke="#c4c8d6" stroke-width=".6"/><rect x="10.5" y="5.5" width="9.5" height="6" fill="#f8f9fc"/><path d="M7 11.8H23.5L25.5 16.5H4.5Z" fill="#596a92"/><path d="M7.4 11.8H23.1L23.6 13H6.9Z" fill="#8391b2"/><rect x="4.2" y="15.8" width="21.6" height="8" rx="2.2" fill="#dde5f4" stroke="#93a4c6" stroke-width=".8"/><rect x="4.8" y="16.2" width="20.4" height="2.4" rx="1.1" fill="#f1f5fb"/><rect x="8.5" y="19.6" width="13" height="5.6" fill="#4a9ce0" stroke="#edf2fa" stroke-width="1.1"/><rect x="10" y="20.8" width="10" height="2.2" fill="#86c4f2"/></svg>
<span class="s" style="left:42px;top:593.0px;">Repertorium A</span>
<svg style="left:8px;top:621px" width="31" height="31" viewBox="0 0 30 30"><defs><linearGradient id="pg8_621" x1="0" y1="0" x2="1" y2="1"><stop offset="0" stop-color="#ebe8dc"/><stop offset="0.5" stop-color="#cfcbbb"/><stop offset="1" stop-color="#a29e8b"/></linearGradient></defs><rect x="0.6" y="0.6" width="28.8" height="28.8" fill="url(#pg8_621)" stroke="#a51d1d" stroke-width="1.2"/><rect x="9" y="4" width="12.5" height="9" fill="#eceef6" stroke="#c4c8d6" stroke-width=".6"/><rect x="10.5" y="5.5" width="9.5" height="6" fill="#f8f9fc"/><path d="M7 11.8H23.5L25.5 16.5H4.5Z" fill="#596a92"/><path d="M7.4 11.8H23.1L23.6 13H6.9Z" fill="#8391b2"/><rect x="4.2" y="15.8" width="21.6" height="8" rx="2.2" fill="#dde5f4" stroke="#93a4c6" stroke-width=".8"/><rect x="4.8" y="16.2" width="20.4" height="2.4" rx="1.1" fill="#f1f5fb"/><rect x="8.5" y="19.6" width="13" height="5.6" fill="#4a9ce0" stroke="#edf2fa" stroke-width="1.1"/><rect x="10" y="20.8" width="10" height="2.2" fill="#86c4f2"/></svg>
<span class="s" style="left:42px;top:630.0px;letter-spacing:-0.12px;">Rep. A jednostronny</span>
<svg style="left:8px;top:658px" width="31" height="31" viewBox="0 0 30 30"><defs><linearGradient id="pg8_658" x1="0" y1="0" x2="1" y2="1"><stop offset="0" stop-color="#ebe8dc"/><stop offset="0.5" stop-color="#cfcbbb"/><stop offset="1" stop-color="#a29e8b"/></linearGradient></defs><rect x="0.6" y="0.6" width="28.8" height="28.8" fill="url(#pg8_658)" stroke="#a51d1d" stroke-width="1.2"/><rect x="9" y="4" width="12.5" height="9" fill="#eceef6" stroke="#c4c8d6" stroke-width=".6"/><rect x="10.5" y="5.5" width="9.5" height="6" fill="#f8f9fc"/><path d="M7 11.8H23.5L25.5 16.5H4.5Z" fill="#596a92"/><path d="M7.4 11.8H23.1L23.6 13H6.9Z" fill="#8391b2"/><rect x="4.2" y="15.8" width="21.6" height="8" rx="2.2" fill="#dde5f4" stroke="#93a4c6" stroke-width=".8"/><rect x="4.8" y="16.2" width="20.4" height="2.4" rx="1.1" fill="#f1f5fb"/><rect x="8.5" y="19.6" width="13" height="5.6" fill="#4a9ce0" stroke="#edf2fa" stroke-width="1.1"/><rect x="10" y="20.8" width="10" height="2.2" fill="#86c4f2"/></svg>
<span class="s" style="left:42px;top:667.0px;letter-spacing:-0.4px;letter-spacing:-0.22px;">Repertorium P</span>
<svg style="left:8px;top:695px" width="31" height="31" viewBox="0 0 30 30"><defs><linearGradient id="pg8_695" x1="0" y1="0" x2="1" y2="1"><stop offset="0" stop-color="#ebe8dc"/><stop offset="0.5" stop-color="#cfcbbb"/><stop offset="1" stop-color="#a29e8b"/></linearGradient></defs><rect x="0.6" y="0.6" width="28.8" height="28.8" fill="url(#pg8_695)" stroke="#a51d1d" stroke-width="1.2"/><rect x="9" y="4" width="12.5" height="9" fill="#eceef6" stroke="#c4c8d6" stroke-width=".6"/><rect x="10.5" y="5.5" width="9.5" height="6" fill="#f8f9fc"/><path d="M7 11.8H23.5L25.5 16.5H4.5Z" fill="#596a92"/><path d="M7.4 11.8H23.1L23.6 13H6.9Z" fill="#8391b2"/><rect x="4.2" y="15.8" width="21.6" height="8" rx="2.2" fill="#dde5f4" stroke="#93a4c6" stroke-width=".8"/><rect x="4.8" y="16.2" width="20.4" height="2.4" rx="1.1" fill="#f1f5fb"/><rect x="8.5" y="19.6" width="13" height="5.6" fill="#4a9ce0" stroke="#edf2fa" stroke-width="1.1"/><rect x="10" y="20.8" width="10" height="2.2" fill="#86c4f2"/></svg>
<span class="s" style="left:42px;top:703.0px;letter-spacing:-0.34px;">Księga depozytowa</span>
<svg style="left:8px;top:732px" width="31" height="31" viewBox="0 0 30 30"><defs><linearGradient id="pg8_732" x1="0" y1="0" x2="1" y2="1"><stop offset="0" stop-color="#ebe8dc"/><stop offset="0.5" stop-color="#cfcbbb"/><stop offset="1" stop-color="#a29e8b"/></linearGradient></defs><rect x="0.6" y="0.6" width="28.8" height="28.8" fill="url(#pg8_732)" stroke="#a51d1d" stroke-width="1.2"/><rect x="9" y="4" width="12.5" height="9" fill="#eceef6" stroke="#c4c8d6" stroke-width=".6"/><rect x="10.5" y="5.5" width="9.5" height="6" fill="#f8f9fc"/><path d="M7 11.8H23.5L25.5 16.5H4.5Z" fill="#596a92"/><path d="M7.4 11.8H23.1L23.6 13H6.9Z" fill="#8391b2"/><rect x="4.2" y="15.8" width="21.6" height="8" rx="2.2" fill="#dde5f4" stroke="#93a4c6" stroke-width=".8"/><rect x="4.8" y="16.2" width="20.4" height="2.4" rx="1.1" fill="#f1f5fb"/><rect x="8.5" y="19.6" width="13" height="5.6" fill="#4a9ce0" stroke="#edf2fa" stroke-width="1.1"/><rect x="10" y="20.8" width="10" height="2.2" fill="#86c4f2"/></svg>
<span class="s" style="left:42px;top:740.0px;">Ewidencja opł. sąd.</span>
<svg style="left:8px;top:768px" width="31" height="31" viewBox="0 0 30 30"><defs><linearGradient id="pg8_768" x1="0" y1="0" x2="1" y2="1"><stop offset="0" stop-color="#ebe8dc"/><stop offset="0.5" stop-color="#cfcbbb"/><stop offset="1" stop-color="#a29e8b"/></linearGradient></defs><rect x="0.6" y="0.6" width="28.8" height="28.8" fill="url(#pg8_768)" stroke="#a51d1d" stroke-width="1.2"/><rect x="9" y="4" width="12.5" height="9" fill="#eceef6" stroke="#c4c8d6" stroke-width=".6"/><rect x="10.5" y="5.5" width="9.5" height="6" fill="#f8f9fc"/><path d="M7 11.8H23.5L25.5 16.5H4.5Z" fill="#596a92"/><path d="M7.4 11.8H23.1L23.6 13H6.9Z" fill="#8391b2"/><rect x="4.2" y="15.8" width="21.6" height="8" rx="2.2" fill="#dde5f4" stroke="#93a4c6" stroke-width=".8"/><rect x="4.8" y="16.2" width="20.4" height="2.4" rx="1.1" fill="#f1f5fb"/><rect x="8.5" y="19.6" width="13" height="5.6" fill="#4a9ce0" stroke="#edf2fa" stroke-width="1.1"/><rect x="10" y="20.8" width="10" height="2.2" fill="#86c4f2"/></svg>
<span class="s" style="left:42px;top:777.0px;">Wykaz opł. sąd.</span>
<svg style="left:8px;top:805px" width="31" height="31" viewBox="0 0 30 30"><defs><linearGradient id="pg8_805" x1="0" y1="0" x2="1" y2="1"><stop offset="0" stop-color="#ebe8dc"/><stop offset="0.5" stop-color="#cfcbbb"/><stop offset="1" stop-color="#a29e8b"/></linearGradient></defs><rect x="0.6" y="0.6" width="28.8" height="28.8" fill="url(#pg8_805)" stroke="#a51d1d" stroke-width="1.2"/><rect x="9" y="4" width="12.5" height="9" fill="#eceef6" stroke="#c4c8d6" stroke-width=".6"/><rect x="10.5" y="5.5" width="9.5" height="6" fill="#f8f9fc"/><path d="M7 11.8H23.5L25.5 16.5H4.5Z" fill="#596a92"/><path d="M7.4 11.8H23.1L23.6 13H6.9Z" fill="#8391b2"/><rect x="4.2" y="15.8" width="21.6" height="8" rx="2.2" fill="#dde5f4" stroke="#93a4c6" stroke-width=".8"/><rect x="4.8" y="16.2" width="20.4" height="2.4" rx="1.1" fill="#f1f5fb"/><rect x="8.5" y="19.6" width="13" height="5.6" fill="#4a9ce0" stroke="#edf2fa" stroke-width="1.1"/><rect x="10" y="20.8" width="10" height="2.2" fill="#86c4f2"/></svg>
<span class="s" style="left:42px;top:813.0px;">Raporty kasowe</span>
<svg style="left:8px;top:842px" width="31" height="31" viewBox="0 0 30 30"><defs><linearGradient id="pg8_842" x1="0" y1="0" x2="1" y2="1"><stop offset="0" stop-color="#ebe8dc"/><stop offset="0.5" stop-color="#cfcbbb"/><stop offset="1" stop-color="#a29e8b"/></linearGradient></defs><rect x="0.6" y="0.6" width="28.8" height="28.8" fill="url(#pg8_842)" stroke="#a51d1d" stroke-width="1.2"/><rect x="9" y="4" width="12.5" height="9" fill="#eceef6" stroke="#c4c8d6" stroke-width=".6"/><rect x="10.5" y="5.5" width="9.5" height="6" fill="#f8f9fc"/><path d="M7 11.8H23.5L25.5 16.5H4.5Z" fill="#596a92"/><path d="M7.4 11.8H23.1L23.6 13H6.9Z" fill="#8391b2"/><rect x="4.2" y="15.8" width="21.6" height="8" rx="2.2" fill="#dde5f4" stroke="#93a4c6" stroke-width=".8"/><rect x="4.8" y="16.2" width="20.4" height="2.4" rx="1.1" fill="#f1f5fb"/><rect x="8.5" y="19.6" width="13" height="5.6" fill="#4a9ce0" stroke="#edf2fa" stroke-width="1.1"/><rect x="10" y="20.8" width="10" height="2.2" fill="#86c4f2"/></svg>
<span class="s" style="left:42px;top:850.0px;letter-spacing:-0.52px;">Podsumowanie należn<span style="position:static;letter-spacing:1.25px">...</span></span>
<div style="left:8px;top:878px;width:31px;height:5px;border:1.5px solid #a81c1c;border-bottom:none;background:#ece9dc;"></div>
<svg style="left:146px;top:867px" width="8" height="5" viewBox="0 0 8 5"><path d="M0 0H8L4 4.5Z" fill="#707070"/></svg>
<div style="left:4px;top:882px;width:160px;height:47px;background:linear-gradient(#fcfcfc 0,#f2f2f2 8px,#e6e6e6 15px,#d3d3d3 16.5px,#dcdcdc 28px,#e9e9e9 40px,#efefef 46px);border-top:1px solid #a2a2a2;"></div>
<span class="t b" style="left:43px;top:899.0px;letter-spacing:0.1px;color:#2a2a2a;font-size:11.5px;">Moduły</span>
<div style="left:4px;top:928px;width:160px;height:47px;background:linear-gradient(#fcfcfc 0,#f2f2f2 8px,#e6e6e6 15px,#d3d3d3 16.5px,#dcdcdc 28px,#e9e9e9 40px,#efefef 46px);border-top:1px solid #a2a2a2;"></div>
<span class="t b" style="left:43px;top:945.0px;letter-spacing:0.1px;color:#2a2a2a;font-size:11.5px;">Skróty</span>
<div style="left:4px;top:975px;width:160px;height:47px;background:linear-gradient(#fdeee2 0,#fbd9b8 5px,#f9bd7c 14px,#f4a42e 15.5px,#f6b044 26px,#facd74 38px,#fcdc94 46px);border-top:1px solid #a2a2a2;"></div>
<span class="t b" style="left:43px;top:992.0px;letter-spacing:0.1px;color:#2a2a2a;font-size:11.5px;">Wydruki</span>
<div style="left:164px;top:246px;width:10px;height:776px;background:linear-gradient(90deg,#a8a8a8 0,#e4e4e4 1px,#e0e0e0 2.8px,#8c8c8c 3px,#a0a0a0 5.4px,#e2e2e2 5.6px,#e0e0e0 8.4px,#9c9c9c 8.6px,#a8a8a8 9.5px,#d0d0d0 10px);"></div>
<div style="left:168px;top:629px;width:2px;height:2px;background:#fafafa;"></div>
<div style="left:168px;top:633px;width:2px;height:2px;background:#fafafa;"></div>
<div style="left:168px;top:637px;width:2px;height:2px;background:#fafafa;"></div>
<div style="left:168px;top:641px;width:2px;height:2px;background:#fafafa;"></div>
<div style="left:176px;top:250px;width:33px;height:24px;background:linear-gradient(#fdfdfd,#eef0f2);border:1px solid #9a9a9a;border-bottom:none;border-radius:3px 3px 0 0;"></div>
<span class="t" style="left:179.3px;top:255.0px;color:#222;letter-spacing:-0.45px;">Pulpit</span>
<div style="left:210px;top:251px;width:55px;height:22px;background:linear-gradient(#8e8e8e,#6c6c6c 50%,#5e5e5e);border:1px solid #555;border-radius:3px 3px 0 0;"></div>
<span class="t" style="left:214px;top:255.0px;color:#f4f4f4;letter-spacing:-0.47px;"><u>K</u>alendarz</span>
<div style="left:266px;top:251px;width:75px;height:22px;background:linear-gradient(#8e8e8e,#6c6c6c 50%,#5e5e5e);border:1px solid #555;border-radius:3px 3px 0 0;"></div>
<span class="t" style="left:269px;top:255.0px;color:#f4f4f4;letter-spacing:-0.57px;"><u>P</u>rzypomnienie</span>
<div style="left:342px;top:251px;width:160px;height:22px;background:linear-gradient(#8e8e8e,#6c6c6c 50%,#5e5e5e);border:1px solid #555;border-radius:3px 3px 0 0;"></div>
<span class="t b" style="left:346px;top:255.0px;color:#fff;letter-spacing:0.3px;">Testowe Komunikaty</span>
<div style="left:174px;top:273px;width:1362px;height:26px;background:linear-gradient(#fbfbfb 0,#eceef0 6px,#d9dde0 12.5px,#bec5cc 13.5px,#d2d8dc 19px,#eaeff0 25px);border-top:1px solid #b4b4b4;"></div>
<svg style="left:179px;top:278px" width="17" height="17" viewBox="0 0 17 17"><circle cx="8.5" cy="8.5" r="7.5" fill="#f0f2f4" stroke="#c4c8cc"/><path d="M4.5 7.5A4.2 4.2 0 0 1 12 6M12.5 9.5A4.2 4.2 0 0 1 5 11" stroke="#a8adb4" stroke-width="1.6" fill="none"/><path d="M12.8 3.8V7H9.6ZM4.2 13.2V10H7.4Z" fill="#a8adb4"/></svg>
<span class="t" style="left:199px;top:279.5px;color:#333;letter-spacing:-0.1px;">Odśwież wszystkie</span>
<svg style="left:298px;top:280px" width="16" height="14" viewBox="0 0 16 14"><rect x="0.5" y="0.5" width="11" height="5" fill="#dde8f4" stroke="#a8bcd4"/><rect x="3.5" y="7.5" width="12" height="5.5" fill="#cfe0f2" stroke="#9ab4d2"/><rect x="4.5" y="8.5" width="10" height="2" fill="#8fb6e0"/></svg>
<span class="t" style="left:317px;top:279.5px;color:#333;letter-spacing:-0.1px;letter-spacing:0.18px;">Dostosuj wygląd</span>
<svg style="left:405px;top:285px" width="6" height="4" viewBox="0 0 6 4"><path d="M0 0H6L3 3.5Z" fill="#444"/></svg>
<div style="left:174px;top:299px;width:940px;height:721px;background:#fafafa;"></div>
<div style="left:184px;top:311px;width:500px;height:268px;background:#fff;border:1px solid #d4d4d4;"></div>
<div style="left:185px;top:311px;width:500px;height:31px;background:#5b8fcc;"></div>
<svg style="left:188px;top:312px" width="32" height="30" viewBox="0 0 32 30"><circle cx="14" cy="13" r="11" fill="#5aa0e0" stroke="#d8e8f4" stroke-width="1.2"/><path d="M8 5Q12 3 15 6Q17 10 13 12Q9 13 7 17Q4 13 5 9Z" fill="#7cc058"/><path d="M17 4Q22 6 24 11Q21 13 19 10Q16 8 17 4Z" fill="#8ccc60"/><path d="M12 17Q16 15 18 19Q15 23 12 22Z" fill="#6cb850"/><ellipse cx="20" cy="21" rx="10" ry="6.5" fill="#f6f8fa" stroke="#8a98a8" stroke-width="1"/><circle cx="20" cy="21" r="4.6" fill="#3a5a88"/><circle cx="20" cy="21" r="2.2" fill="#101828"/><circle cx="18.6" cy="19.6" r="1.1" fill="#fff"/></svg>
<span class="hd" style="left:224px;top:317.0px;line-height:20px;">Często używane strony www</span>
<div style="left:188px;top:343px;width:300px;height:31px;background:#f1f1f1;"></div>
<span class="lnk" style="left:206px;top:344.0px;letter-spacing:-0.43px;">sip.lex.pl</span>
<span class="t" style="left:206px;top:360.0px;letter-spacing:-0.22px;letter-spacing:-0.38px;">System Informacji Prawnej LEX</span>
<span class="lnk" style="left:206px;top:380.0px;">www.produkty.lex.pl/kancelaria-notarialna/</span>
<span class="t g" style="left:206px;top:396.0px;letter-spacing:-0.22px;letter-spacing:-0.32px;">Strona programu Kancelaria Notarialna</span>
<span class="lnk" style="left:206px;top:415.0px;letter-spacing:-0.125px;">www.giif.mofnet.gov.pl/giif/</span>
<span class="t g" style="left:206px;top:432.0px;letter-spacing:-0.22px;">Generalny Inspektor Informacji Finansowej</span>
<span class="lnk" style="left:206px;top:451.0px;">https://branzowa-ekw.ms.gov.pl</span>
<span class="t g" style="left:206px;top:468.0px;letter-spacing:-0.22px;letter-spacing:-0.4px;">Elektroniczne Księgi Wieczyste</span>
<span class="lnk" style="left:206px;top:487.0px;letter-spacing:0.155px;">https://rejestry-notarialne.pl/</span>
<span class="t g" style="left:206px;top:504.0px;letter-spacing:-0.22px;">Rejestry notarialne</span>
<div style="left:184px;top:586px;width:500px;height:268px;background:#fff;border:1px solid #d4d4d4;"></div>
<div style="left:185px;top:586px;width:500px;height:34px;background:#1b6cb5;"></div>
<svg style="left:190px;top:591px" width="28" height="26" viewBox="0 0 28 26"><rect x="0.5" y="0.5" width="26" height="24" fill="#f4f6fa" stroke="#c8d0dc"/><rect x="0.5" y="0.5" width="26" height="6" fill="#f4b040" stroke="#c88820" stroke-width=".6"/><path d="M7 0.5V24.5M13.5 0.5V24.5M20 0.5V24.5" stroke="#b8c4d8" stroke-width="1.2"/></svg>
<span class="hd" style="left:224px;top:594.0px;line-height:20px;letter-spacing:-0.11px;">Akty notarialne w przygotowaniu</span>
<span class="t g" style="left:346px;top:716.0px;letter-spacing:-0.22px;">Brak danych do wyświetlenia</span>
<div style="left:185px;top:826px;width:500px;height:1px;background:#d0d0d0;"></div>
<div style="left:185px;top:853px;width:500px;height:6px;background:linear-gradient(90deg,#fff 0,#fff 125px,#8a8a8a 165px,#555 185px,#777 205px,#d4d4d4 250px,#e4e4e4 300px);"></div>
<div style="left:184px;top:860px;width:461px;height:162px;background:#fff;border:1px solid #d4d4d4;"></div>
<div style="left:185px;top:861px;width:460px;height:33px;background:#800080;"></div>
<svg style="left:193px;top:866px" width="22" height="23" viewBox="0 0 22 23"><rect x="0" y="0.5" width="7" height="6" fill="#4a8ac8"/><rect x="0" y="8.5" width="7" height="6" fill="#f0c060"/><rect x="0" y="16.5" width="7" height="6" fill="#58a890"/><path d="M9 2H20M9 4.5H15M9 10H20M9 12.5H15M9 18H20M9 20.5H15" stroke="#b884c0" stroke-width="1"/></svg>
<span class="hd" style="left:224px;top:869.0px;line-height:20px;letter-spacing:-0.19px;">Statystyki repertorium</span>
<span class="t b" style="left:194px;top:910.0px;color:#0b5bc4;text-decoration:underline;letter-spacing:-0.1px;">Dzisiaj:</span>
<span class="t g" style="right:1186px;top:910.0px;letter-spacing:-0.22px;color:#808080;">Liczba aktów</span>
<span class="t g" style="right:1075px;top:910.0px;letter-spacing:-0.22px;color:#808080;">Liczba czynności</span>
<span class="t g" style="right:899px;top:910.0px;letter-spacing:-0.22px;color:#808080;">Wynagrodzenie</span>
<span class="t b" style="right:1185px;top:933.0px;line-height:34px;font-size:31px;color:#e9003f;letter-spacing:0;transform:scaleX(1.13);transform-origin:100% 50%;">0</span>
<span class="t b" style="right:1074px;top:933.0px;line-height:34px;font-size:31px;color:#e9003f;letter-spacing:0;transform:scaleX(1.13);transform-origin:100% 50%;">0</span>
<span class="t b" style="right:898px;top:933.0px;line-height:34px;font-size:31px;color:#e9003f;letter-spacing:0;transform:scaleX(1.13);transform-origin:100% 50%;">0</span>
<span class="t b" style="left:194px;top:979.0px;color:#0b5bc4;text-decoration:underline;letter-spacing:-0.1px;letter-spacing:0.1px;">W tygodniu:</span>
<span class="t g" style="right:1186px;top:979.0px;letter-spacing:-0.22px;color:#808080;">Liczba aktów</span>
<span class="t g" style="right:1075px;top:979.0px;letter-spacing:-0.22px;color:#808080;">Liczba czynności</span>
<span class="t g" style="right:899px;top:979.0px;letter-spacing:-0.22px;color:#808080;">Wynagrodzenie</span>
<span class="t b" style="right:1185px;top:1002.0px;line-height:34px;font-size:31px;color:#e9003f;letter-spacing:0;transform:scaleX(1.13);transform-origin:100% 50%;">0</span>
<span class="t b" style="right:1074px;top:1002.0px;line-height:34px;font-size:31px;color:#e9003f;letter-spacing:0;transform:scaleX(1.13);transform-origin:100% 50%;">0</span>
<span class="t b" style="right:898px;top:1002.0px;line-height:34px;font-size:31px;color:#e9003f;letter-spacing:0;transform:scaleX(1.13);transform-origin:100% 50%;">0</span>
<div style="left:645px;top:860px;width:7px;height:162px;background:linear-gradient(90deg,#b8b8b8 0,#ececec 1px,#e6e6e6 6px,#c4c4c4 7px);"></div>
<div style="left:652px;top:860px;width:462px;height:34px;background:#3c9a5c;"></div>
<div style="left:652px;top:894px;width:462px;height:128px;background:#fff;border-right:1px solid #d0d0d0;"></div>
<span class="t g" style="left:731.0px;width:300px;text-align:center;top:990.0px;letter-spacing:-0.22px;">Brak danych do wyświetlenia</span>
<div style="left:0px;top:1020px;width:1536px;height:4px;background:linear-gradient(#bdbdbd,#a0a0a0 50%,#c8c8c8);"></div>
<div style="left:461px;top:151px;width:870px;height:741px;background:#e6e6e6;border:3px solid #2b2d31;"></div>
<div style="left:463px;top:153px;width:866px;height:25.5px;background:linear-gradient(#4b4f57,#3b3e45 45%,#2d2f34 55%,#33353a);"></div>
<svg style="left:466px;top:156.5px" width="15.5" height="15.5" viewBox="0 0 16 16"><rect x="0.5" y="0.5" width="15" height="15" fill="#f4ece4" stroke="#d8aa88"/><rect x="1.5" y="1.5" width="13" height="13" fill="none" stroke="#ead2bc" stroke-width="1"/><path d="M2.5 1.5 L5 1.2 L6.2 7.8 L4 8.8 Z" fill="#c07038"/><path d="M3 2 L4 2 L4.6 5 L3.6 5.4 Z" fill="#e8b070"/><ellipse cx="9.3" cy="10.2" rx="3.7" ry="2.9" fill="#cf3c2c"/><ellipse cx="9" cy="9.6" rx="1.7" ry="1.1" fill="#f4b0a0"/><path d="M3.5 12.5 L7 13.8 L3 14 Z" fill="#a89888"/></svg>
<span class="m" style="left:486.3px;top:157.0px;color:#fff;letter-spacing:-0.1px;letter-spacing:-0.25px;">Parametry wydruku</span>
<svg style="left:1312px;top:159px" width="10" height="10" viewBox="0 0 10 10"><path d="M1.5 1.5L8.5 8.5M8.5 1.5L1.5 8.5" stroke="#f0f0f0" stroke-width="2"/></svg>
<div style="left:465px;top:202px;width:861px;height:644px;border:1px solid #c6c6c6;background:#e6e6e6;"></div>
<div style="left:467px;top:180px;width:75px;height:23px;border:1px solid #a8a8a8;border-bottom:none;border-radius:3px 3px 0 0;background:linear-gradient(#fafafa,#e8e8e8);"></div>
<div style="left:470px;top:182px;width:70px;height:17px;border:1px dotted #333;"></div>
<span class="t" style="left:472px;top:183.5px;color:#222;">Repertorium A</span>
<div style="left:543px;top:181px;width:91px;height:21px;border:1px solid #5a5a5a;border-bottom:none;border-radius:3px 3px 0 0;background:linear-gradient(#909090,#707070 50%,#606060);"></div>
<span class="t" style="left:547px;top:184.5px;color:#f6f6f6;">Raporty cykliczne</span>
<span class="t" style="left:472px;top:211.0px;">Data początkowa</span>
<div class="inp" style="left:622px;top:208px;width:328px;height:19px;"></div>
<span class="t" style="left:624px;top:210.0px;">2021-01-01</span>
<svg style="left:939px;top:216.5px" width="6" height="3" viewBox="0 0 6 3"><path d="M0 0H6L3 3Z" fill="#222"/></svg>
<span class="t" style="left:472px;top:233.0px;">Data końcowa</span>
<div class="inp" style="left:622px;top:230px;width:328px;height:19px;"></div>
<span class="t" style="left:624px;top:232.0px;">2021-01-31</span>
<svg style="left:939px;top:238.5px" width="6" height="3" viewBox="0 0 6 3"><path d="M0 0H6L3 3Z" fill="#222"/></svg>
<div class="grp" style="left:957px;top:208px;width:360px;height:40px;"></div>
<div class="grph" style="left:957px;top:208px;width:360px;height:19px;"></div>
<span class="t" style="left:968px;top:210.0px;color:#2c2c2c;">Drukuj strony</span>
<div class="rb" style="left:968px;top:230px;width:11px;height:11px;"></div>
<span class="t" style="left:984px;top:229.0px;">Parzyste</span>
<div class="rb" style="left:1083px;top:230px;width:11px;height:11px;"></div>
<span class="t" style="left:1099px;top:229.0px;">Nieparzyste</span>
<div class="rb on" style="left:1199px;top:230px;width:11px;height:11px;"></div>
<span class="t" style="left:1215px;top:229.0px;">Dwie</span>
<span class="t" style="left:956px;top:252.0px;">Numeracja stron od</span>
<div class="inp" style="left:1077px;top:250px;width:67px;height:19px;"></div>
<span class="t" style="left:1080px;top:252.0px;">1</span>
<svg style="left:1133px;top:254px" width="5" height="3" viewBox="0 0 5 3"><path d="M0 3H5L2.5 0Z" fill="#222"/></svg>
<svg style="left:1133px;top:262px" width="5" height="3" viewBox="0 0 5 3"><path d="M0 0H5L2.5 3Z" fill="#222"/></svg>
<div style="left:473px;top:308px;width:827px;height:534px;border:1px solid #cdcdcd;background:#e6e6e6;"></div>
<div style="left:473px;top:290px;width:827px;height:19px;border:1px solid #cdcdcd;background:linear-gradient(#f2f2f2,#e2e2e2);"></div>
<span class="t b" style="left:736.0px;width:300px;text-align:center;top:292.5px;letter-spacing:0;color:#222;">Mniej opcji</span>
<div style="left:1283px;top:292px;width:15px;height:15px;border:1px solid #a2a2a2;background:linear-gradient(#fbfbfb,#dcdcdc);border-radius:1px;"><svg style="left:3px;top:2px" width="7" height="9" viewBox="0 0 7 9"><path d="M0.5 4L3.5 1L6.5 4M0.5 8L3.5 5L6.5 8" stroke="#222" stroke-width="1.3" fill="none"/></svg></div>
<div style="left:1307px;top:290px;width:16px;height:554px;background:#c8c8c8;"></div>
<div style="left:1307px;top:307px;width:16px;height:518px;background:linear-gradient(90deg,#fdfdfd 0,#f4f4f4 5px,#dedee0 9px,#c6c6ca 12px,#b4b4b8 14px);border:1px solid #6e6e6e;border-right-color:#8a8a8a;"></div>
<div style="left:1307px;top:290px;width:16px;height:17px;background:linear-gradient(#3e3e3e,#4a4a4a);"><svg style="left:4px;top:6px" width="9" height="5" viewBox="0 0 9 5"><path d="M0 5H9L4.5 0Z" fill="#e4e4e4"/></svg></div>
<div style="left:1307px;top:824px;width:16px;height:20px;background:linear-gradient(#4a4a4a,#3e3e3e);"><svg style="left:3.5px;top:10px" width="9" height="5" viewBox="0 0 9 5"><path d="M0 0H9L4.5 5Z" fill="#e4e4e4"/></svg></div>
<div style="left:1311px;top:562px;width:8px;height:1px;background:#909090;"></div>
<div style="left:1311px;top:564px;width:8px;height:1px;background:#909090;"></div>
<div style="left:1311px;top:566px;width:8px;height:1px;background:#909090;"></div>
<div style="left:1311px;top:568px;width:8px;height:1px;background:#909090;"></div>
<div class="grp" style="left:481px;top:320px;width:395px;height:110px;"></div>
<div class="grph" style="left:481px;top:320px;width:395px;height:19px;"></div>
<span class="t" style="left:492px;top:322.0px;color:#2c2c2c;">Ustawienia strony</span>
<div class="grp" style="left:490px;top:350px;width:377px;height:46px;"></div>
<div class="grph" style="left:490px;top:350px;width:377px;height:18px;"></div>
<span class="t" style="left:501px;top:352.0px;color:#2c2c2c;">Format strony</span>
<div class="rb on" style="left:500px;top:376px;width:11px;height:11px;"></div>
<span class="t" style="left:516px;top:375.0px;">A4</span>
<div class="rb" style="left:683px;top:376px;width:11px;height:11px;"></div>
<span class="t" style="left:699px;top:375.0px;">A3</span>
<span class="t dis" style="left:490px;top:401.0px;">Orientacja</span>
<div class="inp" style="left:544px;top:399px;width:117px;height:19px;background:#e9e9e9;border-color:#bcbcbc;"></div>
<span class="t dis" style="left:546px;top:401.0px;letter-spacing:-0.73px;">Pozioma</span>
<svg style="left:650px;top:407.5px" width="6" height="3" viewBox="0 0 6 3"><path d="M0 0H6L3 3Z" fill="#aaa"/></svg>
<span class="t" style="left:775px;top:401.0px;letter-spacing:-0.65px;">Czcionka</span>
<div class="inp" style="left:821px;top:399px;width:45px;height:19px;"></div>
<span class="t" style="left:824px;top:401.0px;">8</span>
<svg style="left:855px;top:403px" width="5" height="3" viewBox="0 0 5 3"><path d="M0 3H5L2.5 0Z" fill="#222"/></svg>
<svg style="left:855px;top:411px" width="5" height="3" viewBox="0 0 5 3"><path d="M0 0H5L2.5 3Z" fill="#222"/></svg>
<div class="grp" style="left:481px;top:436px;width:395px;height:215px;"></div>
<div class="grph" style="left:481px;top:436px;width:395px;height:19px;"></div>
<span class="t" style="left:492px;top:438.0px;color:#2c2c2c;letter-spacing:-0.14px;">Informacje na wydruku</span>
<div class="cb" style="left:491px;top:470px;width:12px;height:12px;"><svg style="left:0px;top:0px" width="10" height="10" viewBox="0 0 10 10"><path d="M1.6 3.6L4 7.6L8.6 1.2" stroke="#2f6fcc" stroke-width="1.7" fill="none" stroke-linejoin="miter"/></svg></div>
<span class="t" style="left:508px;top:468.0px;letter-spacing:-0.08px;">Tytuł wydruku</span>
<div class="cb" style="left:627px;top:470px;width:12px;height:12px;"><svg style="left:0px;top:0px" width="10" height="10" viewBox="0 0 10 10"><path d="M1.6 3.6L4 7.6L8.6 1.2" stroke="#2f6fcc" stroke-width="1.7" fill="none" stroke-linejoin="miter"/></svg></div>
<span class="t" style="left:644px;top:468.0px;">Podpis notariusza</span>
<div class="cb" style="left:491px;top:488px;width:12px;height:12px;"></div>
<span class="t" style="left:508px;top:486.0px;letter-spacing:-0.02px;">Numeracja str. tyt.</span>
<div class="cb dis" style="left:627px;top:488px;width:12px;height:12px;"></div>
<span class="t dis" style="left:644px;top:486.0px;">Pusta strona na końcu</span>
<div class="cb" style="left:491px;top:507px;width:12px;height:12px;"><svg style="left:0px;top:0px" width="10" height="10" viewBox="0 0 10 10"><path d="M1.6 3.6L4 7.6L8.6 1.2" stroke="#2f6fcc" stroke-width="1.7" fill="none" stroke-linejoin="miter"/></svg></div>
<span class="t" style="left:508px;top:504.5px;">Wydruk numeru aktu</span>
<div class="cb" style="left:627px;top:507px;width:12px;height:12px;"></div>
<span class="t" style="left:644px;top:504.5px;">Rozgrupuj</span>
<div class="cb" style="left:491px;top:525px;width:12px;height:12px;"><svg style="left:0px;top:0px" width="10" height="10" viewBox="0 0 10 10"><path d="M1.6 3.6L4 7.6L8.6 1.2" stroke="#2f6fcc" stroke-width="1.7" fill="none" stroke-linejoin="miter"/></svg></div>
<span class="t" style="left:508px;top:523.0px;">Dane o zastępstwie</span>
<div class="cb" style="left:491px;top:543px;width:12px;height:12px;"><svg style="left:0px;top:0px" width="10" height="10" viewBox="0 0 10 10"><path d="M1.6 3.6L4 7.6L8.6 1.2" stroke="#2f6fcc" stroke-width="1.7" fill="none" stroke-linejoin="miter"/></svg></div>
<span class="t" style="left:508px;top:541.0px;letter-spacing:-0.4px;">Wzorce czynności</span>
<div class="cb" style="left:627px;top:543px;width:12px;height:12px;"><svg style="left:0px;top:0px" width="10" height="10" viewBox="0 0 10 10"><path d="M1.6 3.6L4 7.6L8.6 1.2" stroke="#2f6fcc" stroke-width="1.7" fill="none" stroke-linejoin="miter"/></svg></div>
<span class="t" style="left:644px;top:541.0px;letter-spacing:-0.54px;">Powiązania</span>
<div class="btn" style="left:490px;top:558.5px;width:131px;height:24px;background:linear-gradient(#f0f0f0,#d8d8d8 40%,#bcbcbc 60%,#d0d0d0);"></div>
<span class="t" style="left:497px;top:563.5px;color:#333;">Dane z rejestru PCC</span>
<svg style="left:606px;top:569px" width="8" height="4" viewBox="0 0 8 4"><path d="M0 0H8L4 4Z" fill="#222"/></svg>
<div class="btn" style="left:626px;top:558.5px;width:241px;height:24px;background:linear-gradient(#f0f0f0,#d8d8d8 40%,#bcbcbc 60%,#d0d0d0);"></div>
<span class="t" style="left:633px;top:563.5px;color:#333;">Dane z rejestru SD</span>
<svg style="left:852px;top:569px" width="8" height="4" viewBox="0 0 8 4"><path d="M0 0H8L4 4Z" fill="#222"/></svg>
<div class="cb" style="left:491px;top:587px;width:12px;height:12px;"></div>
<span class="t" style="left:508px;top:585.0px;letter-spacing:-0.18px;">Wyłącz opłatę sąd.</span>
<div class="cb" style="left:627px;top:588px;width:12px;height:12px;"><svg style="left:0px;top:0px" width="10" height="10" viewBox="0 0 10 10"><path d="M1.6 3.6L4 7.6L8.6 1.2" stroke="#2f6fcc" stroke-width="1.7" fill="none" stroke-linejoin="miter"/></svg></div>
<span class="t" style="left:644px;top:586.0px;">Opłaty RS i KW w uwagach</span>
<div class="cb" style="left:491px;top:607px;width:12px;height:12px;"><svg style="left:0px;top:0px" width="10" height="10" viewBox="0 0 10 10"><path d="M1.6 3.6L4 7.6L8.6 1.2" stroke="#2f6fcc" stroke-width="1.7" fill="none" stroke-linejoin="miter"/></svg></div>
<span class="t" style="left:508px;top:605.0px;"><span style="position:static;letter-spacing:-0.55px">Dołącz </span><span style="position:static;letter-spacing:-1.2px">PESEL</span></span>
<div class="cb" style="left:627px;top:607px;width:12px;height:12px;"><svg style="left:0px;top:0px" width="10" height="10" viewBox="0 0 10 10"><path d="M1.6 3.6L4 7.6L8.6 1.2" stroke="#2f6fcc" stroke-width="1.7" fill="none" stroke-linejoin="miter"/></svg></div>
<span class="t" style="left:644px;top:605.0px;">Dołącz nr dok. tożsamości</span>
<div class="cb" style="left:491px;top:626px;width:12px;height:12px;"><svg style="left:0px;top:0px" width="10" height="10" viewBox="0 0 10 10"><path d="M1.6 3.6L4 7.6L8.6 1.2" stroke="#2f6fcc" stroke-width="1.7" fill="none" stroke-linejoin="miter"/></svg></div>
<span class="t" style="left:508px;top:624.0px;">Dane z ewidencji Opłat Sądowych</span>
<div class="grp" style="left:481px;top:658px;width:395px;height:122px;"></div>
<div class="grph" style="left:481px;top:658px;width:395px;height:19px;"></div>
<span class="t" style="left:492px;top:660.0px;color:#2c2c2c;letter-spacing:-0.45px;">Przeniesienia</span>
<div class="cb" style="left:491px;top:691px;width:12px;height:12px;"><svg style="left:0px;top:0px" width="10" height="10" viewBox="0 0 10 10"><path d="M1.6 3.6L4 7.6L8.6 1.2" stroke="#2f6fcc" stroke-width="1.7" fill="none" stroke-linejoin="miter"/></svg></div>
<span class="t" style="left:508px;top:689.0px;">Wyświetl wartość przeniesienia</span>
<span class="t" style="left:489px;top:711.0px;letter-spacing:-0.4px;">Przeniesienie od</span>
<div class="inp" style="left:570px;top:709px;width:297px;height:19px;"></div>
<span class="t" style="left:572px;top:711.0px;">0</span>
<svg style="left:856px;top:717.5px" width="6" height="3" viewBox="0 0 6 3"><path d="M0 0H6L3 3Z" fill="#222"/></svg>
<div class="cb dis" style="left:491px;top:736px;width:12px;height:12px;"></div>
<span class="t dis" style="left:508px;top:734.0px;">Zeruj wartości przeniesień dla nowego miesiąca</span>
<div class="cb" style="left:491px;top:754px;width:12px;height:12px;"></div>
<span class="t" style="left:508px;top:752.0px;letter-spacing:-0.36px;">Podsumowanie wartości przedmiotu</span>
<div class="grp" style="left:881px;top:320px;width:411px;height:97px;"></div>
<div class="grph" style="left:881px;top:320px;width:411px;height:19px;"></div>
<span class="t" style="left:892px;top:322.0px;color:#2c2c2c;">Ustawienia wydruku</span>
<div class="cb" style="left:891px;top:354px;width:12px;height:12px;"><svg style="left:0px;top:0px" width="10" height="10" viewBox="0 0 10 10"><path d="M1.6 3.6L4 7.6L8.6 1.2" stroke="#2f6fcc" stroke-width="1.7" fill="none" stroke-linejoin="miter"/></svg></div>
<span class="t" style="left:908px;top:352.0px;">Wydruk ciągły</span>
<div class="cb" style="left:891px;top:373px;width:12px;height:12px;"></div>
<span class="t" style="left:908px;top:370.5px;">Ten sam nr na lewej i prawej stronie</span>
<div class="cb" style="left:891px;top:391px;width:12px;height:12px;"><svg style="left:0px;top:0px" width="10" height="10" viewBox="0 0 10 10"><path d="M1.6 3.6L4 7.6L8.6 1.2" stroke="#2f6fcc" stroke-width="1.7" fill="none" stroke-linejoin="miter"/></svg></div>
<span class="t" style="left:908px;top:389.0px;">Wielkie litery nazw stron</span>
<div class="grp" style="left:881px;top:423px;width:411px;height:302px;"></div>
<div class="grph" style="left:881px;top:423px;width:411px;height:19px;"></div>
<span class="t" style="left:892px;top:425.0px;color:#2c2c2c;letter-spacing:-0.53px;">Podsumowania</span>
<div class="grp" style="left:890px;top:453px;width:393px;height:218px;"></div>
<div class="grph" style="left:890px;top:453px;width:393px;height:19px;"></div>
<span class="t" style="left:901px;top:455.0px;color:#2c2c2c;letter-spacing:-0.42px;">Zbiorcze podsumowanie należności</span>
<div class="inp" style="left:899px;top:483px;width:374px;height:19px;"></div>
<span class="t" style="left:901px;top:485.0px;">Na końcu</span>
<svg style="left:1262px;top:491.5px" width="6" height="3" viewBox="0 0 6 3"><path d="M0 0H6L3 3Z" fill="#222"/></svg>
<div class="cb" style="left:900px;top:509px;width:12px;height:12px;"><svg style="left:0px;top:0px" width="10" height="10" viewBox="0 0 10 10"><path d="M1.6 3.6L4 7.6L8.6 1.2" stroke="#2f6fcc" stroke-width="1.7" fill="none" stroke-linejoin="miter"/></svg></div>
<span class="t" style="left:917px;top:506.5px;letter-spacing:-0.6px;">Podsumowanie</span>
<div class="cb" style="left:900px;top:527px;width:12px;height:12px;"><svg style="left:0px;top:0px" width="10" height="10" viewBox="0 0 10 10"><path d="M1.6 3.6L4 7.6L8.6 1.2" stroke="#2f6fcc" stroke-width="1.7" fill="none" stroke-linejoin="miter"/></svg></div>
<span class="t" style="left:917px;top:525.0px;">Opłata sądowa w podziale na sądy</span>
<div class="inp" style="left:899px;top:542px;width:307px;height:19px;"></div>
<span class="t" style="left:901px;top:544.0px;">VAT automatycznie</span>
<svg style="left:1195px;top:550.5px" width="6" height="3" viewBox="0 0 6 3"><path d="M0 0H6L3 3Z" fill="#222"/></svg>
<div style="left:1213px;top:542px;width:60px;height:19px;border:1px solid #b8b8b8;background:#e2e2e2;"></div>
<div class="cb" style="left:900px;top:566px;width:12px;height:12px;"><svg style="left:0px;top:0px" width="10" height="10" viewBox="0 0 10 10"><path d="M1.6 3.6L4 7.6L8.6 1.2" stroke="#2f6fcc" stroke-width="1.7" fill="none" stroke-linejoin="miter"/></svg></div>
<span class="t" style="left:917px;top:563.5px;">Składka na potrzeby samorządu</span>
<div class="cb" style="left:900px;top:584px;width:12px;height:12px;"><svg style="left:0px;top:0px" width="10" height="10" viewBox="0 0 10 10"><path d="M1.6 3.6L4 7.6L8.6 1.2" stroke="#2f6fcc" stroke-width="1.7" fill="none" stroke-linejoin="miter"/></svg></div>
<span class="t" style="left:917px;top:582.0px;">Informacja o PCC od umowy spółki kapitałowej</span>
<div class="cb" style="left:900px;top:602px;width:12px;height:12px;"><svg style="left:0px;top:0px" width="10" height="10" viewBox="0 0 10 10"><path d="M1.6 3.6L4 7.6L8.6 1.2" stroke="#2f6fcc" stroke-width="1.7" fill="none" stroke-linejoin="miter"/></svg></div>
<span class="t" style="left:917px;top:600.0px;letter-spacing:-0.4px;">Opłaty za wpis do RS i KW</span>
<div class="cb" style="left:900px;top:621px;width:12px;height:12px;"></div>
<span class="t" style="left:917px;top:619.0px;letter-spacing:-0.17px;">Informacja o taksie niezafakturowanej</span>
<div class="btn" style="left:899px;top:636px;width:96px;height:25px;"></div>
<span class="t" style="left:907px;top:641.0px;color:#333;">Daty przelewów</span>
<div class="cb" style="left:891px;top:676px;width:12px;height:12px;"><svg style="left:0px;top:0px" width="10" height="10" viewBox="0 0 10 10"><path d="M1.6 3.6L4 7.6L8.6 1.2" stroke="#2f6fcc" stroke-width="1.7" fill="none" stroke-linejoin="miter"/></svg></div>
<span class="t" style="left:908px;top:674.0px;letter-spacing:-0.49px;">Podsumowanie dnia</span>
<span class="t" style="left:889px;top:695.0px;">Sumy zestawów opłat</span>
<div class="inp" style="left:1015px;top:693px;width:267px;height:19px;"></div>
<span class="t" style="left:1017px;top:695.0px;letter-spacing:-0.78px;">Razem</span>
<svg style="left:1271px;top:701.5px" width="6" height="3" viewBox="0 0 6 3"><path d="M0 0H6L3 3Z" fill="#222"/></svg>
<div class="grp" style="left:881px;top:731px;width:411px;height:100px;"></div>
<div class="grph" style="left:881px;top:731px;width:411px;height:19px;"></div>
<span class="t" style="left:892px;top:733.0px;color:#2c2c2c;">Wypisy / Poświadczenia</span>
<div class="cb" style="left:891px;top:764px;width:12px;height:12px;"><svg style="left:0px;top:0px" width="10" height="10" viewBox="0 0 10 10"><path d="M1.6 3.6L4 7.6L8.6 1.2" stroke="#2f6fcc" stroke-width="1.7" fill="none" stroke-linejoin="miter"/></svg></div>
<span class="t" style="left:908px;top:762.0px;letter-spacing:-0.42px;">Pokaż ilość wypisów</span>
<div class="cb" style="left:891px;top:783px;width:12px;height:12px;"><svg style="left:0px;top:0px" width="10" height="10" viewBox="0 0 10 10"><path d="M1.6 3.6L4 7.6L8.6 1.2" stroke="#2f6fcc" stroke-width="1.7" fill="none" stroke-linejoin="miter"/></svg></div>
<span class="t" style="left:908px;top:780.5px;letter-spacing:-0.38px;">Pokaż numery wypisów</span>
<div class="cb" style="left:1194px;top:783px;width:12px;height:12px;"></div>
<span class="t" style="left:1211px;top:780.5px;">Odpisy osobno</span>
<span class="t" style="left:889px;top:801.0px;letter-spacing:-0.18px;">Ilość stron wypisu i pośw.</span>
<div class="inp" style="left:1015px;top:799px;width:267px;height:19px;"></div>
<span class="t" style="left:1017px;top:801.0px;">Brak wydruku</span>
<svg style="left:1271px;top:807.5px" width="6" height="3" viewBox="0 0 6 3"><path d="M0 0H6L3 3Z" fill="#222"/></svg>
<div class="btn" style="left:471px;top:857px;width:23px;height:21px;"></div>
<span class="t b" style="left:470.5px;width:24px;text-align:center;top:858.5px;line-height:18px;font-size:15px;color:#101088;letter-spacing:0;">?</span>
<div class="btn" style="left:1167px;top:857px;width:74px;height:25px;"></div>
<svg style="left:1176px;top:861px" width="17" height="17" viewBox="0 0 17 17"><rect x="4" y="1" width="9" height="7" fill="#f4f6fa" stroke="#8a94a8" stroke-width=".7"/><rect x="1" y="6.5" width="15" height="6.5" rx="1.5" fill="#d8dfee" stroke="#7a88a8" stroke-width=".8"/><rect x="4" y="10.5" width="9" height="5" fill="#58a4e4" stroke="#eef2f8" stroke-width=".8"/><rect x="2.5" y="8" width="12" height="1.6" fill="#5c6c94"/></svg>
<span class="t" style="left:1195px;top:862.5px;color:#222;">Wy<u>d</u>ruk</span>
<div class="btn" style="left:1246px;top:857px;width:76px;height:25px;"></div>
<svg style="left:1256.5px;top:861px" width="16" height="16" viewBox="0 0 16 16"><circle cx="8" cy="8" r="7.3" fill="#e02828" stroke="#a81414" stroke-width=".8"/><circle cx="8" cy="6" r="5" fill="#f06a5a" opacity=".55"/><path d="M5 5L11 11M11 5L5 11" stroke="#fff" stroke-width="2.2" stroke-linecap="round"/></svg>
<span class="t" style="left:1275px;top:862.5px;color:#222;"><u>Z</u>amknij</span>
</div></body></html>
